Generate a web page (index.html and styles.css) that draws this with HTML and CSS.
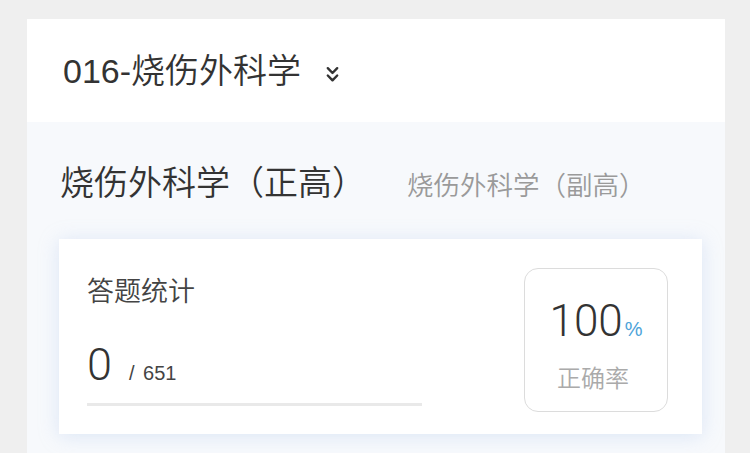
FILE: index.html
```html
<!DOCTYPE html>
<html lang="zh-CN">
<head>
  <meta charset="UTF-8">
  <meta name="viewport" content="width=device-width, initial-scale=1.0">
  <title>答题统计</title>
  <link rel="stylesheet" href="styles.css">
</head>
<body>
  <div class="page">
    <div class="panel">
      <div class="subject-bar">
        <span class="subject-name">016-烧伤外科学</span>
        <svg class="subject-arrow" width="13" height="17" viewBox="0 0 13 17">
          <polyline points="1.8,2.2 6.5,7 11.2,2.2" fill="none" stroke="#333" stroke-width="2.4" stroke-linecap="round" stroke-linejoin="round"/>
          <polyline points="1.8,9.5 6.5,14.3 11.2,9.5" fill="none" stroke="#333" stroke-width="2.4" stroke-linecap="round" stroke-linejoin="round"/>
        </svg>
      </div>

      <div class="content">
        <div class="tabs">
          <span class="tab active">烧伤外科学（正高）</span>
          <span class="tab">烧伤外科学（副高）</span>
        </div>

        <div class="stat-card">
          <div class="stat-left">
            <div class="stat-title">答题统计</div>
            <div class="stat-count">
              <span class="done">0</span>
              <span class="total">/ 651</span>
            </div>
            <div class="stat-line"></div>
          </div>
          <div class="rate-box">
            <div class="rate-value">100<span class="rate-unit">%</span></div>
            <div class="rate-label">正确率</div>
          </div>
        </div>
      </div>
    </div>
  </div>
</body>
</html>
```

FILE: styles.css
```css
body {
  margin: 0;
  background-color: #efefef;
  font-family: "Liberation Sans", "Noto Sans CJK SC", sans-serif;
  font-weight: 350;
  color: #333;
}

.page {
  padding: 19px 25px 0 27px;
  height: 434px;
}

.panel {
  background-color: #f7f9fc;
  height: 100%;
}

.subject-bar {
  background-color: #fff;
  height: 103px;
  display: flex;
  align-items: center;
  padding-left: 36px;
}

.subject-name {
  font-size: 34px;
  color: #333;
  line-height: 1;
}

.subject-arrow {
  margin-left: 25px;
  margin-top: 8px;
}

.content {
  padding: 44px 23px 0 32px;
}

.tabs {
  display: flex;
  align-items: baseline;
  padding-left: 1px;
}

.tab {
  font-size: 26.5px;
  line-height: 1;
  color: #9a9a9a;
  margin-left: 41px;
}

.tab.active {
  font-size: 34px;
  color: #333;
  margin-left: 0;
}

.stat-card {
  margin-top: 39px;
  background-color: #fff;
  box-shadow: 0 2px 18px rgba(170, 195, 235, 0.35);
  display: flex;
  justify-content: space-between;
  padding: 29px 34px 22px 28px;
}

.stat-left {
  width: 335px;
}

.stat-title {
  font-size: 27px;
  line-height: 1;
  color: #444;
  margin-top: 11px;
}

.stat-count {
  display: flex;
  align-items: baseline;
  margin-top: 36px;
  line-height: 1;
}

.done {
  font-family: Roboto, "Liberation Sans", sans-serif;
  font-weight: 300;
  font-size: 45px;
  color: #333;
}

.total {
  font-size: 20px;
  color: #444;
  margin-left: 17px;
  word-spacing: 3px;
}

.stat-line {
  height: 3px;
  background-color: #e9e9e9;
  margin-top: 16px;
}

.rate-box {
  width: 142px;
  height: 142px;
  border: 1px solid #dcdcdc;
  border-radius: 14px;
  text-align: center;
}

.rate-value {
  font-family: Roboto, "Liberation Sans", sans-serif;
  font-weight: 300;
  font-size: 44px;
  line-height: 1;
  color: #333;
  margin-top: 30px;
}

.rate-unit {
  font-family: "Liberation Sans", sans-serif;
  font-size: 20px;
  color: #4da3d9;
  margin-left: 2px;
}

.rate-label {
  font-size: 24px;
  line-height: 1;
  color: #aaa;
  margin-top: 24px;
  padding-right: 6px;
}
```
